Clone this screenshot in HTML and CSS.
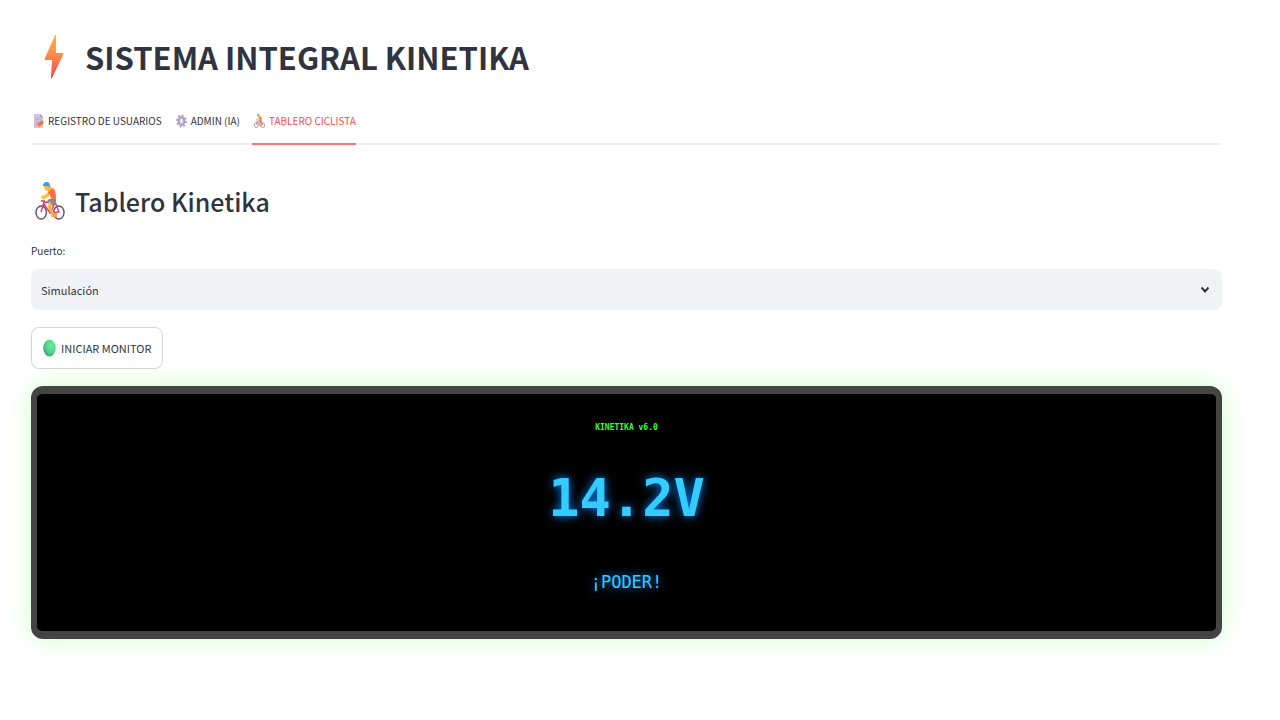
FILE: index.html
```html
<!DOCTYPE html>
<html lang="es">
<head>
    <meta charset="UTF-8">
    <meta name="viewport" content="width=device-width, initial-scale=1.0">
    <title>Sistema Integral Kinetika</title>
    <link rel="stylesheet" href="styles.css">
</head>
<body>
    <!-- Shared icons -->
    <svg class="icon-defs" aria-hidden="true">
        <symbol id="cyclist" viewBox="0 0 30 40">
            <g fill="none" stroke="#6c5078" stroke-width="1.5">
                <ellipse cx="6.2" cy="31.5" rx="5.2" ry="6.5"/>
                <ellipse cx="23.8" cy="31.5" rx="5.2" ry="6.5"/>
            </g>
            <path d="M6 31L9 21L20 22L15 32L9 23M15 32L24 31L20 21M6 20L10 20" fill="none" stroke="#cf3f68" stroke-width="1.4"/>
            <path d="M14 18L21 18Q22 23 18 25L15 24L12 20Z" fill="#9a8290"/>
            <path d="M14 20L17 23L16 27L20 33L17 35L13 27Z" fill="#ffb52e"/>
            <path d="M17 33L22 32L22 36L16 36Z" fill="#ffa45c"/>
            <path d="M14 9L18 7Q21 9 21 18L16 18L15 14L12 13Z" fill="#ff7043"/>
            <path d="M12 12L15 13L13 16L9 18L7 18L6 15L10 14Z" fill="#ffc02e"/>
            <path d="M9 5L14 4L17 7L14 10L10 9Z" fill="#ffb52e"/>
            <path d="M8 5Q8 1 12 1Q15 1 15 6L12 5Z" fill="#2fa5e5"/>
        </symbol>
    </svg>

    <div class="container">
        <h1>
            <svg class="bolt" viewBox="0 0 20 46" aria-hidden="true">
                <defs>
                    <linearGradient id="boltFill" x2="0" y2="1">
                        <stop offset="0" stop-color="#ffb648"/>
                        <stop offset="0.5" stop-color="#ff8648"/>
                        <stop offset="1" stop-color="#f03f55"/>
                    </linearGradient>
                </defs>
                <path d="M11 1Q12 0 12 2L12 19L18 19Q20 19 19 21L8 44Q7 46 7 43L8 26L2 26Q0 26 1 24Z" fill="url(#boltFill)"/>
            </svg>
            SISTEMA INTEGRAL KINETIKA
        </h1>

        <!-- Tabs -->
        <div class="tabs" role="tablist">
            <button type="button" class="tab" role="tab" aria-selected="false">
                <svg viewBox="0 0 11 16" aria-hidden="true">
                    <path d="M1 1H7L10 4V15H1Z" fill="#cfc3dc"/>
                    <path d="M7 1V4H10" fill="#a99bb8"/>
                    <path d="M2 6H8M2 9H6M2 12H4" stroke="#b3a5c4"/>
                    <path d="M3 14L4 11L9 7L11 10L6 14Z" fill="#ff7043"/>
                    <path d="M3 14L4 11L6 14Z" fill="#ffc18a"/>
                </svg>
                REGISTRO DE USUARIOS
            </button>
            <button type="button" class="tab" role="tab" aria-selected="false">
                <svg viewBox="0 0 11 16" aria-hidden="true">
                    <ellipse cx="5.5" cy="8" rx="4.5" ry="5.8" fill="none" stroke="#a99abd" stroke-width="1.6" stroke-dasharray="2 2"/>
                    <ellipse cx="5.5" cy="8" rx="3" ry="4" fill="#d4cce0" stroke="#a99abd" stroke-width="1.8"/>
                    <ellipse cx="5.5" cy="8" rx="1" ry="1.4" fill="#fff"/>
                </svg>
                ADMIN (IA)
            </button>
            <button type="button" class="tab active" role="tab" aria-selected="true">
                <svg viewBox="0 0 30 40" aria-hidden="true"><use href="#cyclist"/></svg>
                TABLERO CICLISTA
            </button>
        </div>

        <!-- Dashboard -->
        <h2>
            <svg class="cyclist" viewBox="0 0 30 40" aria-hidden="true"><use href="#cyclist"/></svg>
            Tablero Kinetika
        </h2>

        <label for="port">Puerto:</label>
        <div class="select-box">
            <select id="port">
                <option>Simulación</option>
            </select>
            <svg class="chevron" viewBox="0 0 8 8" aria-hidden="true">
                <path d="M0.5 1.5L4 5.5L7.5 1.5" fill="none" stroke="#31333f" stroke-width="2"/>
            </svg>
        </div>

        <button type="button" class="start-button">
            <svg viewBox="0 0 13 18" aria-hidden="true">
                <defs>
                    <radialGradient id="dotFill" cx="0.65" cy="0.35" r="0.7">
                        <stop offset="0" stop-color="#68ed98"/>
                        <stop offset="0.6" stop-color="#50d68b"/>
                        <stop offset="1" stop-color="#459984"/>
                    </radialGradient>
                </defs>
                <ellipse cx="6.5" cy="9" rx="6.2" ry="8.6" fill="url(#dotFill)"/>
            </svg>
            INICIAR MONITOR
        </button>

        <div class="lcd">
            <div class="lcd-title">KINETIKA v6.0</div>
            <div class="lcd-value">14.2V</div>
            <div class="lcd-status">¡PODER!</div>
        </div>
    </div>
</body>
</html>
```

FILE: styles.css
```css
* {
    box-sizing: border-box;
}
body {
    margin: 0;
    background-color: #fff;
    color: #31333f;
    font-family: "Noto Sans CJK JP", sans-serif;
    font-size: 11px;
}
button, select {
    font-family: inherit;
    color: inherit;
}
.icon-defs {
    position: absolute;
    width: 0;
    height: 0;
}
.container {
    padding: 27px 58px 28px 31px;
}
h1, h2 {
    display: flex;
    align-items: center;
    margin: 0;
}
h1 {
    gap: 21px;
    height: 60px;
    padding-left: 13px;
    font-size: 31px;
    line-height: 40px;
    font-weight: 700;
}
.bolt {
    width: 20px;
    height: 46px;
}
.tabs {
    display: flex;
    gap: 12px;
    height: 58px;
    padding-top: 13px;
    border-bottom: 2px solid #eeeff1;
}
.tab {
    display: flex;
    align-items: center;
    gap: 4px;
    height: 45px;
    padding: 0 0 2px 2px;
    border: none;
    border-bottom: 2px solid transparent;
    background: none;
    font-size: 10px;
    cursor: pointer;
}
.tab svg {
    width: 11px;
    height: 16px;
}
.tab.active {
    border-color: #ff7378;
    color: #ff4b4b;
}
h2 {
    gap: 10px;
    margin-top: 32px;
    padding-left: 4px;
    font-size: 25px;
    line-height: 48px;
    font-weight: 500;
}
.cyclist {
    width: 30px;
    height: 40px;
}
label {
    display: block;
    margin-top: 16px;
    font-size: 10px;
    line-height: 20px;
}
.select-box {
    position: relative;
    margin-top: 8px;
}
select {
    appearance: none;
    display: block;
    width: 100%;
    height: 41px;
    padding: 0 10px;
    border: none;
    border-radius: 8px;
    background-color: #f0f2f6;
    font-size: 11px;
}
.chevron {
    position: absolute;
    top: 17px;
    right: 13px;
    width: 8px;
    height: 8px;
    pointer-events: none;
}
.start-button {
    display: flex;
    align-items: center;
    gap: 5px;
    height: 42px;
    margin: 17px 0;
    padding: 0 10px 0 11px;
    border: 1px solid #d6d6d9;
    border-radius: 8px;
    background-color: #fff;
    font-size: 11px;
    cursor: pointer;
}
.start-button svg {
    width: 13px;
    height: 18px;
}
.lcd {
    padding: 24px 20px 28px;
    border: 8px solid #444;
    border-width: 8px 6px;
    border-radius: 12px;
    background-color: #000;
    box-shadow: 0 0 24px rgba(0, 255, 0, 0.2);
    color: #33ccff;
    font-family: "DejaVu Sans Mono", monospace;
    text-align: center;
}
.lcd-title {
    color: #33ff33;
    font-size: 8px;
    line-height: 20px;
    font-weight: 700;
}
.lcd-value {
    margin: 12px 0 16px;
    font-size: 52px;
    line-height: 96px;
    font-weight: 700;
    text-shadow: 0 0 10px #0088ff;
}
.lcd-status {
    font-size: 17px;
    line-height: 41px;
    text-shadow: 0 0 10px #0088ff;
}
```
